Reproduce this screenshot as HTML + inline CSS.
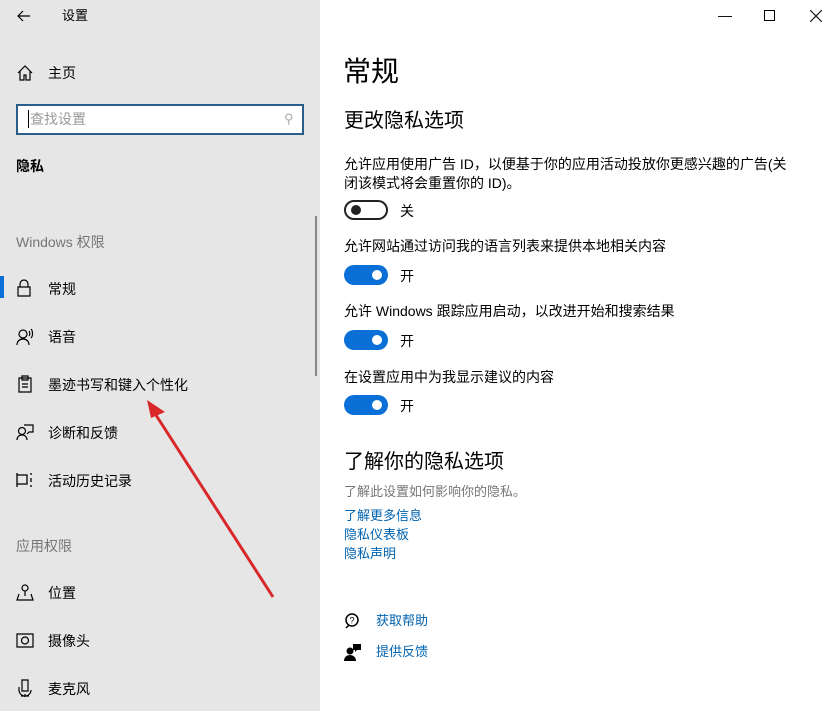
<!DOCTYPE html>
<html><head><meta charset="utf-8"><style>
*{margin:0;padding:0;box-sizing:border-box}
body{width:839px;height:711px;overflow:hidden;background:#fff;font-family:"Liberation Sans","Noto Sans CJK SC",sans-serif;color:#000;position:relative}
.side{position:absolute;left:0;top:0;width:320px;height:711px;background:#e6e6e6}
.t{position:absolute;white-space:nowrap;font-size:14px;line-height:18px}
.ic{position:absolute}
.tg{position:absolute;width:44px;height:20px;border-radius:10px}
.on{background:#0a6fd6}
.on::after{content:"";position:absolute;right:6px;top:5px;width:10px;height:10px;border-radius:50%;background:#fff}
.off{border:2px solid #222;background:#fff}
.off::after{content:"";position:absolute;left:5px;top:3px;width:10px;height:10px;border-radius:50%;background:#222}
.lk{color:#0063b1}
.g{color:#767676}
</style></head><body>
<div class="side">
<svg class="ic" style="left:16px;top:8px" width="16" height="16" viewBox="0 0 16 16"><path d="M14 8H2M7 3L2 8l5 5" stroke="#000" fill="none" stroke-width="1.2"/></svg>
<div class="t" style="left:62px;top:7px;font-size:13px">设置</div>
<svg class="ic" style="left:16px;top:64px" width="18" height="18" viewBox="0 0 18 18"><path d="M2 9L9 2l7 7M4 7v9h4v-5h2v5h4V7" stroke="#000" fill="none" stroke-width="1.2"/></svg>
<div class="t" style="left:48px;top:64px">主页</div>
<div style="position:absolute;left:16px;top:104px;width:288px;height:31px;border:2px solid #2a5d8c;background:#fff"></div>
<div style="position:absolute;left:28px;top:110px;width:1px;height:18px;background:#000"></div>
<div class="t g" style="left:30px;top:110px;color:#999">查找设置</div>
<div class="t" style="left:284px;top:110px;color:#aaa;font-size:13px">⚲</div>
<div class="t" style="left:16px;top:157px;font-weight:bold">隐私</div>
<div class="t g" style="left:16px;top:233px">Windows 权限</div>
<div style="position:absolute;left:0;top:276px;width:4px;height:22px;background:#0a6fd6"></div>
<svg class="ic" style="left:16px;top:279px" width="16" height="18" viewBox="0 0 16 18"><path d="M4 8V5a4 4 0 018 0v3M2 8h12v9H2z" stroke="#000" fill="none" stroke-width="1.2"/></svg>
<div class="t" style="left:48px;top:280px">常规</div>
<svg class="ic" style="left:16px;top:328px" width="18" height="18" viewBox="0 0 18 18"><circle cx="7" cy="6" r="4" stroke="#000" fill="none" stroke-width="1.2"/><path d="M1 17c0-4 3-6 6-6s6 2 6 6M13 3c1 1 1 4 0 5M15 1c2 2 2 7 0 9" stroke="#000" fill="none" stroke-width="1.2"/></svg>
<div class="t" style="left:48px;top:328px">语音</div>
<svg class="ic" style="left:17px;top:375px" width="16" height="18" viewBox="0 0 16 18"><path d="M2 3h12v14H2zM5 1h6v4H5zM5 9h6M5 12h6" stroke="#000" fill="none" stroke-width="1.2"/></svg>
<div class="t" style="left:48px;top:376px">墨迹书写和键入个性化</div>
<svg class="ic" style="left:16px;top:423px" width="18" height="18" viewBox="0 0 18 18"><circle cx="6" cy="8" r="3.5" stroke="#000" fill="none" stroke-width="1.2"/><path d="M1 17c0-3 2-5 5-5s5 2 5 5M8 2h9v7h-4l-2 2" stroke="#000" fill="none" stroke-width="1.2"/></svg>
<div class="t" style="left:48px;top:424px">诊断和反馈</div>
<svg class="ic" style="left:16px;top:471px" width="18" height="18" viewBox="0 0 18 18"><path d="M1 2v14M1 4h10v9H1M1 13h10M15 2v2M15 7v4M15 14v2" stroke="#000" fill="none" stroke-width="1.3"/></svg>
<div class="t" style="left:48px;top:472px">活动历史记录</div>
<div class="t g" style="left:16px;top:537px">应用权限</div>
<svg class="ic" style="left:16px;top:583px" width="18" height="18" viewBox="0 0 18 18"><circle cx="9" cy="5" r="3" stroke="#000" fill="none" stroke-width="1.2"/><path d="M9 8v5M3 11l-2 6h16l-2-6" stroke="#000" fill="none" stroke-width="1.2"/></svg>
<div class="t" style="left:48px;top:584px">位置</div>
<svg class="ic" style="left:16px;top:632px" width="18" height="16" viewBox="0 0 18 16"><path d="M1 2h16v13H1z" stroke="#000" fill="none" stroke-width="1.2"/><circle cx="9" cy="8.5" r="3.5" stroke="#000" fill="none" stroke-width="1.2"/></svg>
<div class="t" style="left:48px;top:632px">摄像头</div>
<svg class="ic" style="left:17px;top:679px" width="16" height="18" viewBox="0 0 16 18"><path d="M5 1h6v11H5zM2 8v3a6 6 0 0012 0M8 15v3M4 17h8" stroke="#000" fill="none" stroke-width="1.2"/></svg>
<div class="t" style="left:48px;top:680px">麦克风</div>
<div style="position:absolute;left:315px;top:216px;width:2px;height:160px;background:#888"></div>
</div>
<svg style="position:absolute;left:0;top:0" width="320" height="711"><path d="M273 597L154 412" stroke="#d8282a" stroke-width="3"/><path d="M147 400l18 12-14 6z" fill="#d8282a"/></svg>

<div class="t" style="left:718px;top:6px;font-size:14px">—</div>
<div style="position:absolute;left:764px;top:10px;width:11px;height:11px;border:1px solid #000"></div>
<svg class="ic" style="left:810px;top:10px" width="12" height="12"><path d="M0 0l12 12M12 0L0 12" stroke="#000"/></svg>

<div class="t" style="left:343px;top:55px;font-size:28px;line-height:34px">常规</div>
<div class="t" style="left:344px;top:108px;font-size:20px;line-height:26px">更改隐私选项</div>
<div class="t" style="left:344px;top:155px">允许应用使用广告 ID，以便基于你的应用活动投放你更感兴趣的广告(关</div>
<div class="t" style="left:344px;top:174px">闭该模式将会重置你的 ID)。</div>
<div class="tg off" style="left:344px;top:200px"></div><div class="t" style="left:400px;top:202px">关</div>
<div class="t" style="left:344px;top:237px">允许网站通过访问我的语言列表来提供本地相关内容</div>
<div class="tg on" style="left:344px;top:265px"></div><div class="t" style="left:400px;top:267px">开</div>
<div class="t" style="left:344px;top:302px">允许 Windows 跟踪应用启动，以改进开始和搜索结果</div>
<div class="tg on" style="left:344px;top:330px"></div><div class="t" style="left:400px;top:332px">开</div>
<div class="t" style="left:344px;top:368px">在设置应用中为我显示建议的内容</div>
<div class="tg on" style="left:344px;top:395px"></div><div class="t" style="left:400px;top:397px">开</div>
<div class="t" style="left:344px;top:449px;font-size:20px;line-height:26px">了解你的隐私选项</div>
<div class="t g" style="left:344px;top:483px;font-size:13px">了解此设置如何影响你的隐私。</div>
<div class="t lk" style="left:344px;top:507px;font-size:13px">了解更多信息</div>
<div class="t lk" style="left:344px;top:526px;font-size:13px">隐私仪表板</div>
<div class="t lk" style="left:344px;top:545px;font-size:13px">隐私声明</div>
<svg class="ic" style="left:344px;top:612px" width="18" height="18" viewBox="0 0 18 18"><circle cx="8" cy="8" r="6" stroke="#000" fill="none" stroke-width="1.5"/><path d="M2 16l3-3" stroke="#000" stroke-width="1.5"/><text x="5.5" y="11.5" font-size="9" font-family="Liberation Sans">?</text></svg>
<div class="t lk" style="left:376px;top:612px;font-size:13px">获取帮助</div>
<svg class="ic" style="left:344px;top:643px" width="18" height="18" viewBox="0 0 18 18"><circle cx="6" cy="8" r="3.5" fill="#000"/><path d="M0 18c0-4 3-6 6-6s6 2 6 6z" fill="#000"/><path d="M9 1h8v6h-4l-2 2V7H9z" fill="#000"/></svg>
<div class="t lk" style="left:376px;top:643px;font-size:13px">提供反馈</div>
</body></html>
